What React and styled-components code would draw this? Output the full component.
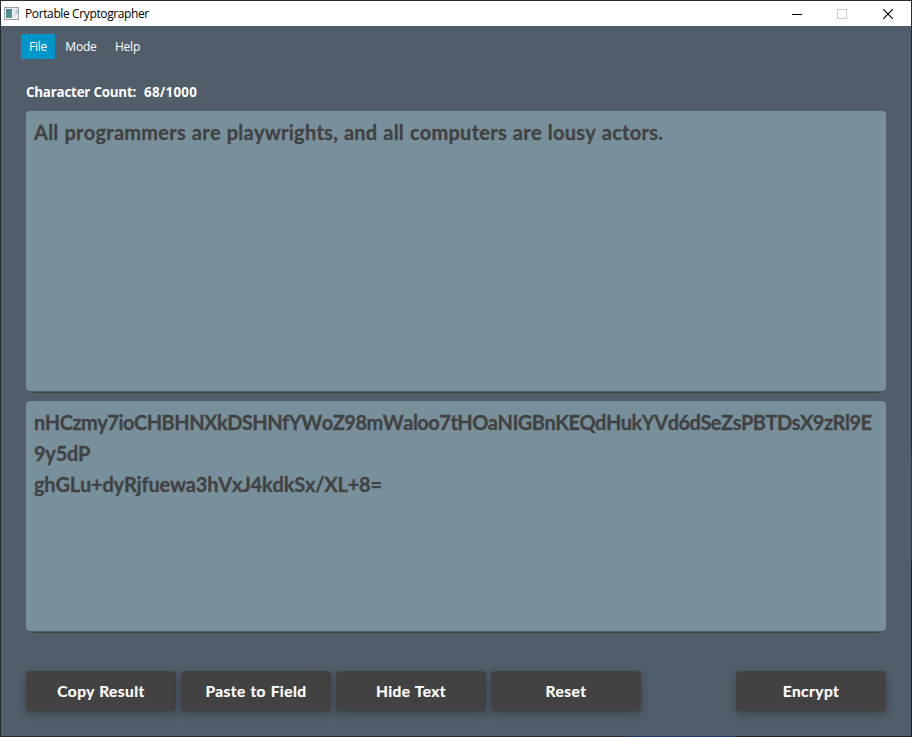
import React from "react";
import styled, { createGlobalStyle } from "styled-components";

const GlobalStyle = createGlobalStyle`
  * { box-sizing: border-box; }
  body { margin: 0; overflow: hidden; }
`;

const Frame = styled.div`
  width: 912px;
  height: 737px;
  padding: 1px;
  background:
    linear-gradient(90deg, #25282c 0 615px, #233b6c 640px 735px, #1f1f23 737px) 0 100% / 100% 1px no-repeat,
    linear-gradient(180deg, #242d31 0 440px, #213a68 465px 560px, #1f2023 563px) 100% 0 / 1px 100% no-repeat,
    #242e31;
`;

const Window = styled.div`
  height: 735px;
  display: flex;
  flex-direction: column;
  background: #515d6b;
`;

const TitleBar = styled.header`
  height: 25px;
  flex: none;
  display: flex;
  align-items: center;
  padding-left: 3px;
  background: #fff;
`;

const Title = styled.span`
  flex: 1;
  margin-left: 5px;
  font: 12px/16px "Open Sans", "Noto Sans", sans-serif;
  letter-spacing: -0.38px;
  color: #000;
`;

const WindowButton = styled.span`
  width: ${(p) => p.$width || 45}px;
  height: 25px;
  display: flex;
  align-items: center;
  justify-content: center;
`;

const MenuBar = styled.nav`
  display: flex;
  height: 25px;
  margin: 8px 0 0 20px;
`;

const MenuItem = styled.span`
  width: ${(p) => p.$width}px;
  text-align: center;
  font: 12px/25px "Open Sans", "Noto Sans", sans-serif;
  letter-spacing: -0.2px;
  color: #fff;
  background: ${(p) => (p.$active ? "#0096c9" : "transparent")};
`;

const Count = styled.div`
  display: flex;
  gap: 8px;
  height: 20px;
  margin: 23px 25px 9px;
  font: bold 13.33px/20px "Open Sans", "Noto Sans", sans-serif;
  letter-spacing: -0.2px;
  color: #fff;
`;

const CountValue = styled.span`
  letter-spacing: 0.25px;
`;

const Field = styled.section`
  flex: none;
  height: ${(p) => p.$height}px;
  margin: 0 25px;
  padding: 6px 8px;
  border-radius: 4px;
  background: #78909b;
`;

const Line = styled.div`
  height: 31px;
  font: bold 20px/31px Lato, "Open Sans", sans-serif;
  letter-spacing: ${(p) => p.$spacing || 0}px;
  word-spacing: ${(p) => p.$word || 0}px;
  font-kerning: none;
  font-variant-ligatures: none;
  -webkit-text-stroke: 0.3px #424242;
  white-space: pre;
  color: #424242;
`;

const Rule = styled.div`
  flex: none;
  height: 1px;
  margin: 1px 32px 8px;
  background: #424242;
`;

const Actions = styled.footer`
  display: flex;
  gap: 5px;
  margin: 30px 25px 0;
`;

const Button = styled.button`
  width: 150px;
  height: 40px;
  padding: 0;
  margin-left: ${(p) => (p.$end ? "auto" : "0")};
  border: 0;
  border-radius: 4px;
  background: #424242;
  color: #fff;
  font: bold 15.5px/40px Lato, "Open Sans", sans-serif;
  letter-spacing: 0.45px;
  word-spacing: 0.5px;
  -webkit-text-stroke: 0.2px #fff;
  box-shadow: 0 3px 9px rgba(0, 0, 0, 0.28);
`;

const AppIcon = () => (
  <svg width="16" height="14" viewBox="0 0 16 14" shapeRendering="crispEdges">
    <defs>
      <linearGradient id="pane" x1="0" y1="0" x2="1" y2="1">
        <stop offset="0" stopColor="#5278a4" />
        <stop offset="1" stopColor="#4eaa76" />
      </linearGradient>
    </defs>
    <rect x=".5" y=".5" width="14" height="12" fill="#f5f7f8" stroke="#9b9fa4" />
    <rect x="2" y="2" width="6" height="9" fill="url(#pane)" />
    <rect x="9" y="2" width="3" height="9" fill="#e2e6e8" />
    <rect x="12" y="2" width="2" height="5" fill="#b9cdd4" />
  </svg>
);

const buttons = [
  { label: "Copy Result" },
  { label: "Paste to Field" },
  { label: "Hide Text" },
  { label: "Reset" },
  { label: "Encrypt", end: true },
];

export default function App() {
  return (
    <Frame>
      <GlobalStyle />
      <Window>
        <TitleBar>
          <AppIcon />
          <Title>Portable Cryptographer</Title>
          <WindowButton>
            <svg width="10" height="10"><path d="M0 5.5H10" stroke="#000" /></svg>
          </WindowButton>
          <WindowButton>
            <svg width="10" height="10"><rect x=".5" y=".5" width="9" height="9" fill="none" stroke="#ccc" /></svg>
          </WindowButton>
          <WindowButton $width={47}>
            <svg width="10" height="10"><path d="M0 0L10 10M10 0L0 10" stroke="#000" strokeWidth="1.1" /></svg>
          </WindowButton>
        </TitleBar>
        <MenuBar>
          <MenuItem $active $width={34}>File</MenuItem>
          <MenuItem $width={52}>Mode</MenuItem>
          <MenuItem $width={41}>Help</MenuItem>
        </MenuBar>
        <Count>
          <span>Character Count:</span>
          <CountValue>68/1000</CountValue>
        </Count>
        <Field $height={280}>
          <Line $spacing={0.25} $word={0.7}>All programmers are playwrights, and all computers are lousy actors.</Line>
        </Field>
        <Rule />
        <Field $height={230}>
          <Line $spacing={-0.51}>nHCzmy7ioCHBHNXkDSHNfYWoZ98mWaloo7tHOaNIGBnKEQdHukYVd6dSeZsPBTDsX9zRl9E</Line>
          <Line $spacing={-0.25}>9y5dP</Line>
          <Line $spacing={-0.2}>ghGLu+dyRjfuewa3hVxJ4kdkSx/XL+8=</Line>
        </Field>
        <Rule />
        <Actions>
          {buttons.map((b) => (
            <Button key={b.label} $end={b.end}>{b.label}</Button>
          ))}
        </Actions>
      </Window>
    </Frame>
  );
}
